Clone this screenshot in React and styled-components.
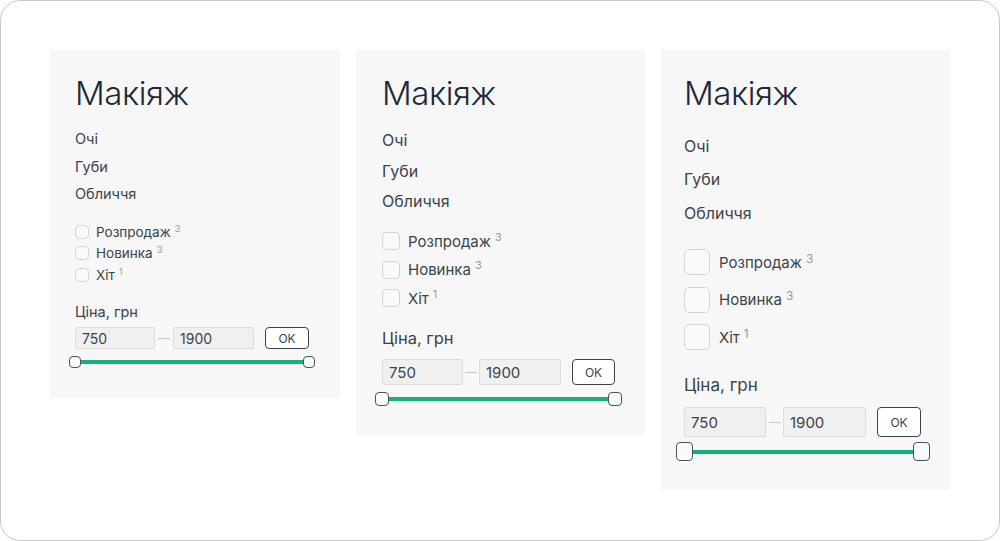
import React from 'react';
import styled, { createGlobalStyle } from 'styled-components';

const GlobalStyle = createGlobalStyle`
  html, body {
    margin: 0;
    padding: 0;
    background: #ffffff;
  }
  body {
    font-family: Inter, "Noto Sans", sans-serif;
  }
`;

const variants = [
  {
    width: 290, padTop: 25, padLeft: 25, padBottom: 30,
    navFont: 14.5, navRow: 27.5, titleMb: 14,
    cbTop: 13.5, cbRow: 21.5, cb: 14, cbRadius: 4, labelFont: 13.5, labelGap: 7, sup: 9.5,
    priceTop: 13.5, priceFont: 14.5, priceRow: 24,
    inputsTop: 4, inputH: 22, inputW: 80, input2W: 81, dashW: 18, okGap: 11, okW: 44, inputFont: 14,
    sliderTop: 7, handleW: 12, handleH: 12, sliderW: 246, track: 4,
  },
  {
    width: 289, padTop: 25, padLeft: 26, padBottom: 29,
    navFont: 16, navRow: 30.5, titleMb: 14,
    cbTop: 10.5, cbRow: 28.5, cb: 18, cbRadius: 4, labelFont: 15, labelGap: 8, sup: 11,
    priceTop: 13.75, priceFont: 16.5, priceRow: 24,
    inputsTop: 9, inputH: 26, inputW: 81, input2W: 82, dashW: 16, okGap: 11, okW: 43, inputFont: 15,
    sliderTop: 7, handleW: 14, handleH: 14, sliderW: 247, track: 4,
  },
  {
    width: 289, padTop: 25, padLeft: 23, padBottom: 29,
    navFont: 16, navRow: 33.5, titleMb: 18,
    cbTop: 13.75, cbRow: 37.5, cb: 26, cbRadius: 5, labelFont: 15, labelGap: 9, sup: 12,
    priceTop: 17.25, priceFont: 17, priceRow: 24,
    inputsTop: 10, inputH: 30, inputW: 82, input2W: 83, dashW: 17, okGap: 11, okW: 44, inputFont: 15,
    sliderTop: 5, handleW: 17, handleH: 19, sliderW: 254, track: 4,
  },
];

const Frame = styled.div`
  box-sizing: border-box;
  width: 1000px;
  height: 541px;
  background: #ffffff;
  border: 1px solid #c9c9c9;
  border-radius: 20px;
  padding: 49px 0 0 49px;
  display: flex;
  align-items: flex-start;
  gap: 16px;
`;

const Panel = styled.section`
  box-sizing: border-box;
  width: ${(p) => p.$v.width}px;
  background: #f7f7f7;
  padding: ${(p) => p.$v.padTop}px 0 ${(p) => p.$v.padBottom}px ${(p) => p.$v.padLeft}px;
  display: flex;
  flex-direction: column;
`;

const Title = styled.h2`
  margin: 0 0 ${(p) => p.$v.titleMb}px;
  font-size: 33px;
  line-height: 36px;
  font-weight: 350;
  color: #1c2a36;
  letter-spacing: -0.4px;
`;

const NavList = styled.ul`
  list-style: none;
  margin: 0;
  padding: 0;
`;

const NavItem = styled.li`
  height: ${(p) => p.$v.navRow}px;
  display: flex;
  align-items: center;
  font-size: ${(p) => p.$v.navFont}px;
  color: #3a434a;
`;

const Checks = styled.div`
  margin-top: ${(p) => p.$v.cbTop}px;
  display: flex;
  flex-direction: column;
`;

const CheckRow = styled.label`
  height: ${(p) => p.$v.cbRow}px;
  display: flex;
  align-items: center;
  gap: ${(p) => p.$v.labelGap}px;
  font-size: ${(p) => p.$v.labelFont}px;
  color: #3a434a;
`;

const Box = styled.span`
  box-sizing: border-box;
  width: ${(p) => p.$v.cb}px;
  height: ${(p) => p.$v.cb}px;
  border: 1px solid #d4d4d4;
  border-radius: ${(p) => p.$v.cbRadius}px;
  background: #f9f9f9;
  flex: none;
`;

const Count = styled.sup`
  font-size: ${(p) => p.$v.sup}px;
  line-height: 1;
  color: #9a9a9a;
  margin-left: 4px;
  vertical-align: top;
`;

const PriceLabel = styled.div`
  margin-top: ${(p) => p.$v.priceTop}px;
  height: ${(p) => p.$v.priceRow}px;
  display: flex;
  align-items: center;
  font-size: ${(p) => p.$v.priceFont}px;
  color: #3a434a;
`;

const InputsRow = styled.div`
  margin-top: ${(p) => p.$v.inputsTop}px;
  display: flex;
  align-items: center;
`;

const PriceInput = styled.div`
  box-sizing: border-box;
  width: ${(p) => p.$w}px;
  height: ${(p) => p.$v.inputH}px;
  border: 1px solid #dcdcdc;
  border-radius: 2px;
  background: #f0f0f0;
  padding-left: 6px;
  display: flex;
  align-items: center;
  font-size: ${(p) => p.$v.inputFont}px;
  color: #3a434a;
`;

const Dash = styled.span`
  width: ${(p) => p.$v.dashW}px;
  display: flex;
  justify-content: center;
  &::before {
    content: '';
    width: 12px;
    height: 1px;
    background: #c8c8c8;
  }
`;

const OkButton = styled.button`
  box-sizing: border-box;
  margin-left: ${(p) => p.$v.okGap}px;
  width: ${(p) => p.$v.okW}px;
  height: ${(p) => p.$v.inputH}px;
  border: 1px solid #37444d;
  border-radius: 4px;
  background: #ffffff;
  font-family: inherit;
  font-size: 12px;
  color: #37444d;
  padding: 0;
`;

const Slider = styled.div`
  margin-top: ${(p) => p.$v.sliderTop}px;
  margin-left: -${(p) => p.$v.handleW / 2}px;
  width: ${(p) => p.$v.sliderW}px;
  height: ${(p) => p.$v.handleH}px;
  position: relative;
  display: flex;
  align-items: center;
  justify-content: space-between;
`;

const Track = styled.div`
  position: absolute;
  left: ${(p) => p.$v.handleW / 2}px;
  right: ${(p) => p.$v.handleW / 2}px;
  top: 50%;
  height: ${(p) => p.$v.track}px;
  margin-top: -${(p) => p.$v.track / 2}px;
  background: #12b07b;
`;

const Handle = styled.span`
  box-sizing: border-box;
  position: relative;
  width: ${(p) => p.$v.handleW}px;
  height: ${(p) => p.$v.handleH}px;
  border: 1px solid #46535c;
  border-radius: 4px;
  background: #fafafa;
`;

const filters = [
  { name: 'Розпродаж', count: 3 },
  { name: 'Новинка', count: 3 },
  { name: 'Хіт', count: 1 },
];

function FilterPanel({ v }) {
  return (
    <Panel $v={v}>
      <Title $v={v}>Макіяж</Title>
      <NavList>
        {['Очі', 'Губи', 'Обличчя'].map((n) => (
          <NavItem key={n} $v={v}>{n}</NavItem>
        ))}
      </NavList>
      <Checks $v={v}>
        {filters.map((f) => (
          <CheckRow key={f.name} $v={v}>
            <Box $v={v} />
            <span>
              {f.name}
              <Count $v={v}>{f.count}</Count>
            </span>
          </CheckRow>
        ))}
      </Checks>
      <PriceLabel $v={v}>Ціна, грн</PriceLabel>
      <InputsRow $v={v}>
        <PriceInput $v={v} $w={v.inputW}>750</PriceInput>
        <Dash $v={v} />
        <PriceInput $v={v} $w={v.input2W}>1900</PriceInput>
        <OkButton $v={v}>OK</OkButton>
      </InputsRow>
      <Slider $v={v}>
        <Track $v={v} />
        <Handle $v={v} />
        <Handle $v={v} />
      </Slider>
    </Panel>
  );
}

export default function App() {
  return (
    <>
      <GlobalStyle />
      <Frame>
        {variants.map((v, i) => (
          <FilterPanel key={i} v={v} />
        ))}
      </Frame>
    </>
  );
}
